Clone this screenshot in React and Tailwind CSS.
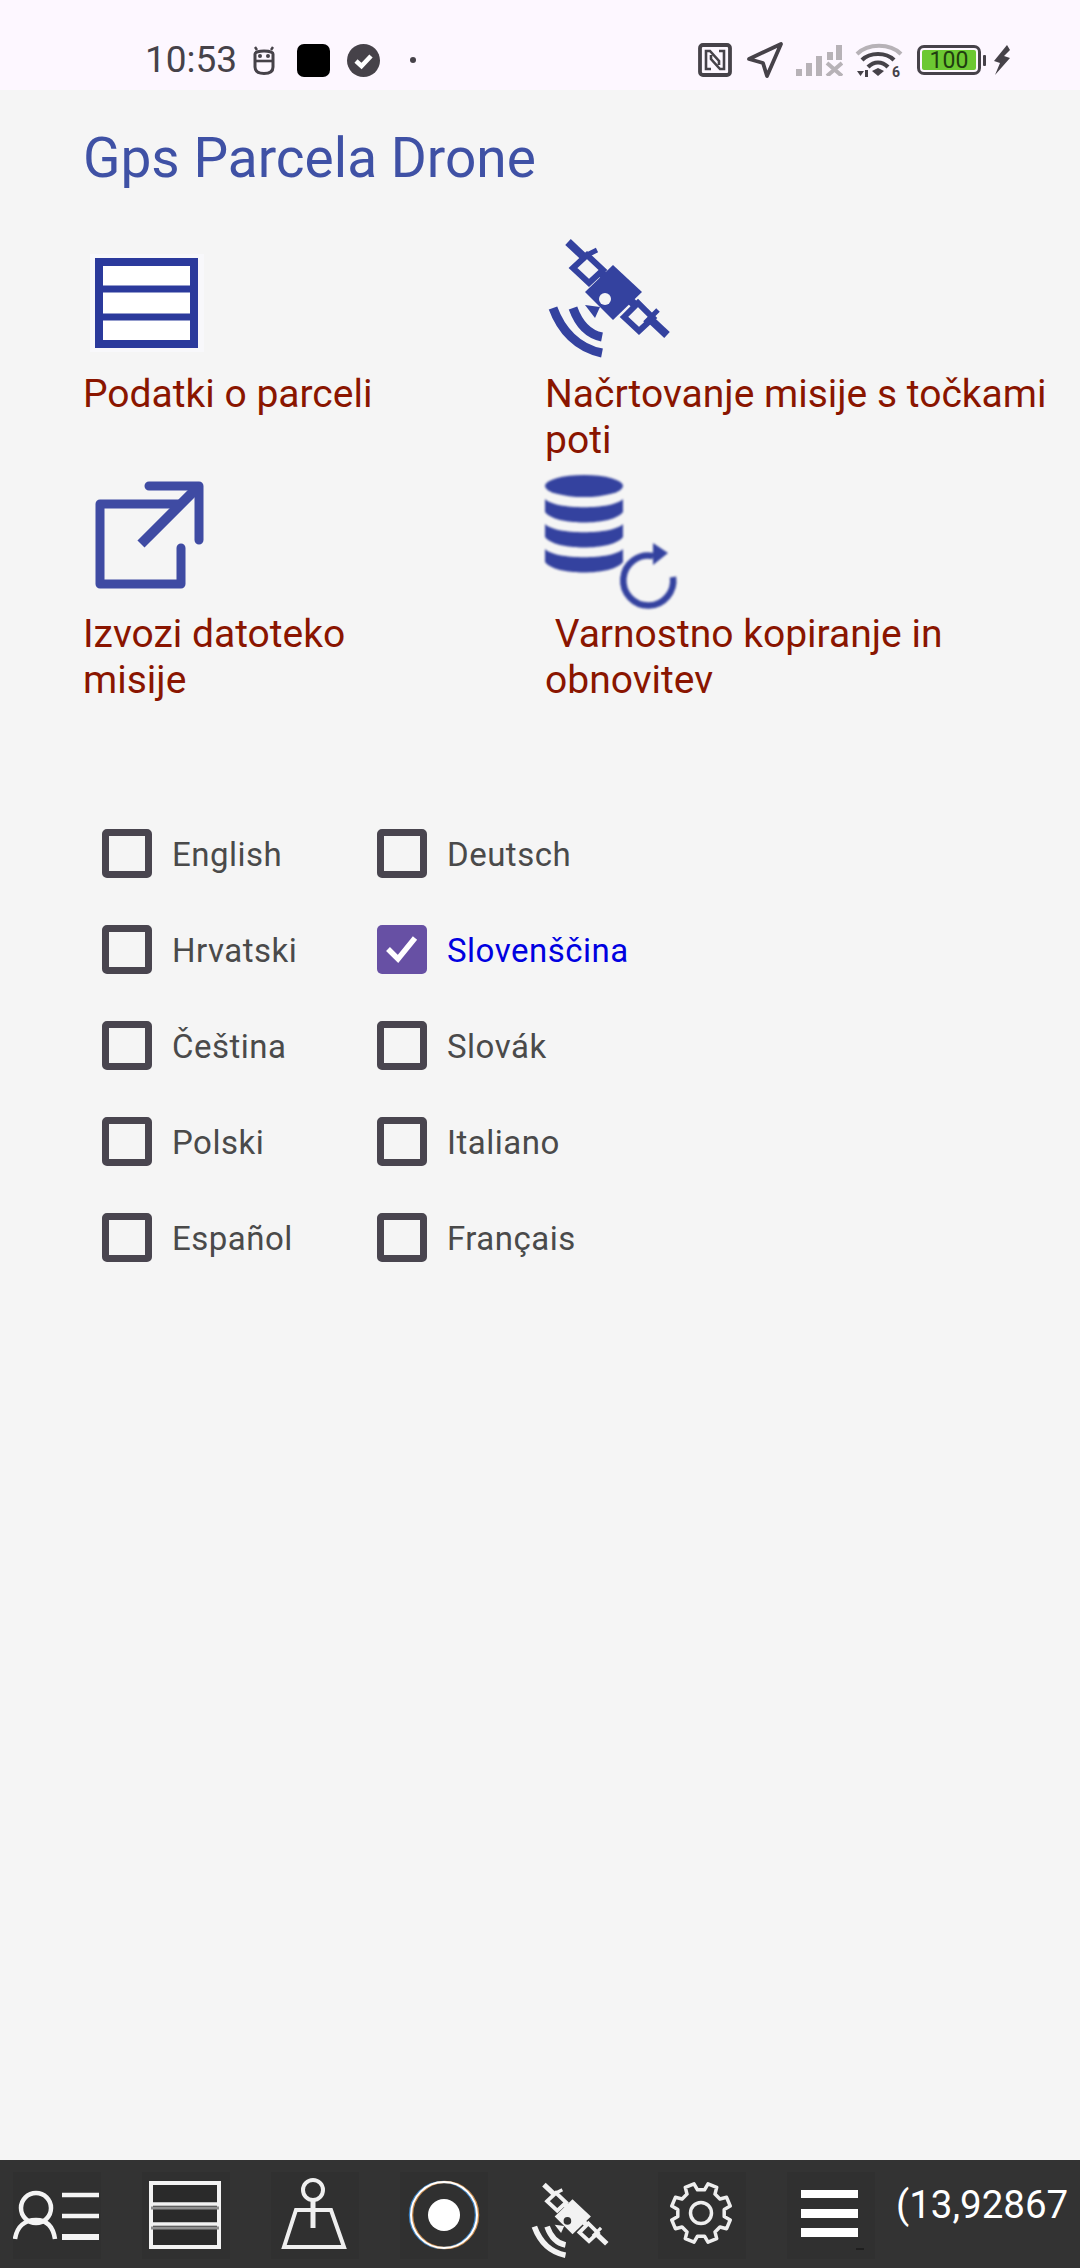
const languages = [
  ["English", "Deutsch"],
  ["Hrvatski", "Slovenščina"],
  ["Čeština", "Slovák"],
  ["Polski", "Italiano"],
  ["Español", "Français"],
];

const BLUE = "#34429f";

// eight teeth, none straight up, same as the toolbar gear
const gearPath = () => {
  const point = (deg, r) => {
    const a = (deg * Math.PI) / 180;
    return `${(43 + r * Math.cos(a)).toFixed(1)} ${(41 + r * Math.sin(a)).toFixed(1)}`;
  };
  const parts = [];
  for (let i = 0; i < 8; i++) {
    const a = 22.5 + i * 45;
    parts.push(point(a - 9, 30), point(a + 9, 30), point(a + 14, 23.5), point(a + 31, 23.5));
  }
  return `M${parts.join("L")}Z`;
};

// drawn on a 125x148 canvas so the big and small versions share one path set
const SatelliteIcon = ({ color, hole, className }) => (
  <svg viewBox="0 0 125 148" fill="none" className={className}>
    <path d="M23 20L122 113" stroke={color} strokeWidth="8" />
    <path d="M68 43L97 70L68 98L40 70Z" fill={color} />
    <circle cx="60" cy="77" r="6" fill={hole} />
    <path d="M28 46L42 33L58 48L44 61Z" fill={hole} stroke={color} strokeWidth="6" />
    <path d="M79 95L93 81L108 96L94 109Z" fill={hole} stroke={color} strokeWidth="6" />
    <path d="M38 35L52 28M100 101L113 88" stroke={color} strokeWidth="5" />
    <path d="M40 83L55 85L50 96Z" fill={color} />
    <path d="M8 86C16 108 32 126 57 131M28 86C33 100 42 112 57 115" stroke={color} strokeWidth="9" />
  </svg>
);

const TableIcon = () => (
  <svg viewBox="0 0 140 148" fill="none" className="h-[148px] w-[140px] blur-[0.7px]">
    <rect x="7" y="32" width="114" height="98" fill="#fafafd" opacity="0.7" />
    <rect x="16" y="40" width="95" height="82" fill="#ffffff" stroke="#2b3a9c" strokeWidth="8" />
    <path d="M16 67H111M16 95H111" stroke="#2b3a9c" strokeWidth="7" />
  </svg>
);

const ExportIcon = () => (
  <svg viewBox="0 0 140 148" fill="none" className="h-[148px] w-[140px] blur-[0.5px]">
    <path d="M95 42H17V122H98V86" stroke="#3f4ba3" strokeWidth="9" strokeLinecap="round" strokeLinejoin="round" />
    <path d="M66 24H116V78" stroke="#3f4ba3" strokeWidth="9" strokeLinecap="round" strokeLinejoin="round" />
    <path d="M116 24L58 82" stroke="#3f4ba3" strokeWidth="10" />
  </svg>
);

const DatabaseIcon = () => (
  <svg viewBox="0 0 140 148" fill="none" className="h-[148px] w-[140px] blur-[0.8px]">
    <ellipse cx="39" cy="24" rx="39" ry="11" fill={BLUE} />
    <path d="M0 37C10 48 68 48 78 37V50C68 64 10 64 0 50Z" fill={BLUE} />
    <path d="M0 62C10 73 68 73 78 62V75C68 89 10 89 0 75Z" fill={BLUE} />
    <path d="M0 87C10 98 68 98 78 87V100C68 114 10 114 0 100Z" fill={BLUE} />
    <path d="M128 115A25 25 0 1 1 108 94" stroke={BLUE} strokeWidth="6.5" />
    <path d="M108 81L123 91L108 103Z" fill={BLUE} />
  </svg>
);

const PersonListIcon = () => (
  <svg viewBox="0 0 88 87" fill="none" stroke="#f4f4f4" className="h-[87px] w-[88px] blur-[0.4px]">
    <circle cx="23" cy="36" r="15" strokeWidth="4.5" />
    <path d="M2 67C4 54 12 48 23 48C34 48 40 54 42 67" strokeWidth="4.5" />
    <path d="M49 23H86M49 44H86" strokeWidth="4.5" />
    <path d="M49 65H86" strokeWidth="6" />
  </svg>
);

const TableDarkIcon = () => (
  <svg viewBox="0 0 88 87" fill="none" className="h-[87px] w-[88px] blur-[0.3px]">
    <rect x="9" y="11" width="68" height="64" fill="#2a2a2a" stroke="#f2f2f2" strokeWidth="4" />
    <path d="M9 36H77M9 56H77" stroke="#8f8f8f" strokeWidth="3" />
    <path d="M9 32H77M9 52H77" stroke="#f2f2f2" strokeWidth="3.5" />
  </svg>
);

const PinMapIcon = () => (
  <svg viewBox="0 0 88 87" fill="none" stroke="#efefef" className="h-[87px] w-[88px] blur-[0.4px]">
    <circle cx="42" cy="18" r="10" strokeWidth="4" />
    <path d="M42 28V56" strokeWidth="5" />
    <path d="M25 38H60L73 75H13Z" strokeWidth="4" />
  </svg>
);

const RecordIcon = () => (
  <svg viewBox="0 0 88 87" fill="none" className="h-[87px] w-[88px]">
    <circle cx="43" cy="43" r="33" stroke="#3b82c4" strokeWidth="2.5" />
    <circle cx="45" cy="43" r="33" stroke="#c98a4a" strokeWidth="2.5" />
    <circle cx="44" cy="43" r="33" stroke="#ffffff" strokeWidth="2" />
    <circle cx="44" cy="43" r="16" fill="#ffffff" />
  </svg>
);

const GearIcon = () => (
  <svg viewBox="0 0 88 87" fill="none" stroke="#eeeeee" className="h-[87px] w-[88px] blur-[0.4px]">
    <path d={gearPath()} strokeWidth="3.5" strokeLinejoin="round" />
    <circle cx="43" cy="41" r="10.5" strokeWidth="3.5" />
  </svg>
);

const MenuIcon = () => (
  <svg viewBox="0 0 88 87" className="h-[87px] w-[88px]">
    <path d="M14 18H71V26H14ZM14 37H71V46H14ZM14 56H71V65H14Z" fill="#ffffff" />
    <path d="M69 77H77" stroke="#1f1f1f" strokeWidth="2" />
  </svg>
);

const StatusBar = () => (
  <div className="flex h-[90px] items-center bg-[#fdf7ff] pt-[30px] pl-[145px] text-[#464249]">
    <span className="w-[92px] text-[37px] leading-[40px] whitespace-nowrap">10:53</span>
    <svg viewBox="0 0 22 29" fill="none" stroke="#464249" className="ml-[16px] h-[29px] w-[22px]">
      <path d="M2 15V21C2 25 5 27.5 11 27.5C17 27.5 20 25 20 21V15" strokeWidth="3" />
      <path d="M1.5 15H20.5" strokeWidth="2.6" />
      <path d="M2 15V8C2 4 20 4 20 8V15" strokeWidth="3" />
      <circle cx="7" cy="10" r="2" fill="#464249" stroke="none" />
      <circle cx="15" cy="10" r="2" fill="#464249" stroke="none" />
      <path d="M4 4L2 1M18 4L20 1" strokeWidth="2.4" />
    </svg>
    <div className="ml-[22px] h-[33px] w-[33px] rounded-[7px] bg-black" />
    <svg viewBox="0 0 33 33" className="ml-[17px] h-[33px] w-[33px]">
      <circle cx="16.5" cy="16.5" r="16.5" fill="#464249" />
      <path d="M9 17L14.5 22L24 12" fill="none" stroke="#ffffff" strokeWidth="4.6" />
    </svg>
    <div className="ml-[30px] h-[6px] w-[6px] rounded-full bg-[#464249]" />
    <svg viewBox="0 0 34 34" fill="none" className="ml-[282px] h-[34px] w-[34px]">
      <rect x="2" y="2" width="30" height="30" rx="3" stroke="#464249" strokeWidth="3.8" />
      <path d="M13 26H8V8H12L21 18V22M21 8H26V26H22L13 16V12" stroke="#464249" strokeWidth="2.6" />
    </svg>
    <svg viewBox="0 0 36 36" fill="none" className="ml-[15px] h-[36px] w-[36px]">
      <path d="M2 17L34 2L20 34L16 21Z" stroke="#464249" strokeWidth="3.8" strokeLinejoin="round" />
    </svg>
    <svg viewBox="0 0 48 31" fill="none" className="ml-[12px] h-[31px] w-[48px]">
      <path d="M1 24H7V31H1ZM11 18H17V31H11ZM21 11H27V31H21ZM32 7H38V15H32ZM41 0H47V15H41Z" fill="#b7b2b7" />
      <path d="M32 18L47 31M47 18L32 31" stroke="#b7b2b7" strokeWidth="4" />
    </svg>
    <svg viewBox="0 0 46 34" fill="none" className="ml-[13px] h-[34px] w-[46px] overflow-visible">
      <path d="M1 11C12 0 34 0 45 11" stroke="#b7b2b7" strokeWidth="4" />
      <path d="M6 17C14 9 30 9 38 17M12 24C18 18 26 18 32 24" stroke="#464249" strokeWidth="4.2" />
      <path d="M16 28L22 25L28 28L22 33Z" fill="#464249" />
      <path d="M1 28H8L4.5 33ZM9 34V27H12L12 34Z" fill="#464249" />
      <text x="36" y="33.5" fontSize="14" fontWeight="700" fill="#464249" fontFamily="Roboto, sans-serif">6</text>
    </svg>
    <div className="ml-[15px] flex h-[30px] w-[64px] shrink-0 items-center rounded-[7px] border-[3px] border-[#464249] p-[2px]">
      <span className="flex h-full w-full items-center justify-center rounded-[2px] bg-[#6cc832] text-[23px] leading-none text-[#1f3d10]">100</span>
    </div>
    <div className="ml-[2px] h-[11px] w-[3px] rounded-[1px] bg-[#464249]" />
    <svg viewBox="0 0 18 30" className="ml-[7px] h-[30px] w-[18px]">
      <path d="M14 0L1 16L7 18L2 30L17 13L11 11L17 5Z" fill="#464249" />
    </svg>
  </div>
);

const LanguageOption = ({ label, checked }) => (
  <label className="flex h-[96px] w-[275px] items-center gap-[20px]">
    {checked ? (
      <span className="flex h-[49px] w-[50px] items-center justify-center rounded-[5px] bg-[#6750a4]">
        <svg viewBox="0 0 34 30" fill="none" className="h-[30px] w-[34px]">
          <path d="M3 15L13 25L30 4" stroke="#ffffff" strokeWidth="5.5" />
        </svg>
      </span>
    ) : (
      <span className="h-[49px] w-[50px] rounded-[5px] border-[7px] border-[#49454f]" />
    )}
    <span className={`pt-[3px] text-[33px] leading-[40px] tracking-[0.5px] ${checked ? "text-[#0000e0]" : "text-[#4a4a4a]"}`}>
      {label}
    </span>
  </label>
);

const Tile = ({ children }) => (
  <div className="h-[87px] w-[88px] shrink-0 bg-[#303030]">{children}</div>
);

export default function App() {
  return (
    <div className="flex h-[2268px] w-full flex-col overflow-hidden bg-[#f5f5f5] font-[Roboto,sans-serif]">
      <StatusBar />

      <div className="flex-1">
        {/* Header */}
        <h1 className="pt-[46px] pl-[83px] text-[55px] leading-[44px] text-[#3f51a5]">Gps Parcela Drone</h1>

        {/* Main actions */}
        <div className="mt-[42px] grid grid-cols-[462px_1fr] pl-[83px] text-[39px] leading-[46px] text-[#8a1500]">
          <div className="h-[240px]">
            <TableIcon />
            <p className="pt-[1px]">Podatki o parceli</p>
          </div>
          <div className="h-[240px]">
            <SatelliteIcon color={BLUE} hole="#f5f5f5" className="h-[148px] w-[125px] blur-[0.7px]" />
            <p className="pt-[1px]">Načrtovanje misije s točkami poti</p>
          </div>
          <div>
            <ExportIcon />
            <p className="w-[300px] pt-[1px]">Izvozi datoteko misije</p>
          </div>
          <div>
            <DatabaseIcon />
            <p className="pt-[1px] whitespace-pre-wrap">{" Varnostno kopiranje in obnovitev"}</p>
          </div>
        </div>

        {/* Language checkboxes */}
        <div className="mt-[102px] pl-[102px]">
          {languages.map(([left, right]) => (
            <div key={left} className="flex">
              <LanguageOption label={left} />
              <LanguageOption label={right} checked={right === "Slovenščina"} />
            </div>
          ))}
        </div>
      </div>

      {/* Bottom toolbar */}
      <div className="flex h-[108px] items-start gap-[41px] bg-[#333333] pt-[12px] pl-[13px]">
        <Tile><PersonListIcon /></Tile>
        <Tile><TableDarkIcon /></Tile>
        <Tile><PinMapIcon /></Tile>
        <Tile><RecordIcon /></Tile>
        <div className="h-[87px] w-[88px] shrink-0">
          <SatelliteIcon color="#f2f2f2" hole="#333333" className="h-[94px] w-[80px]" />
        </div>
        <Tile><GearIcon /></Tile>
        <Tile><MenuIcon /></Tile>
        <span className="-ml-[20px] mt-[11px] text-[38.5px] leading-[44px] whitespace-nowrap text-white">(13,92867</span>
      </div>
    </div>
  );
}
